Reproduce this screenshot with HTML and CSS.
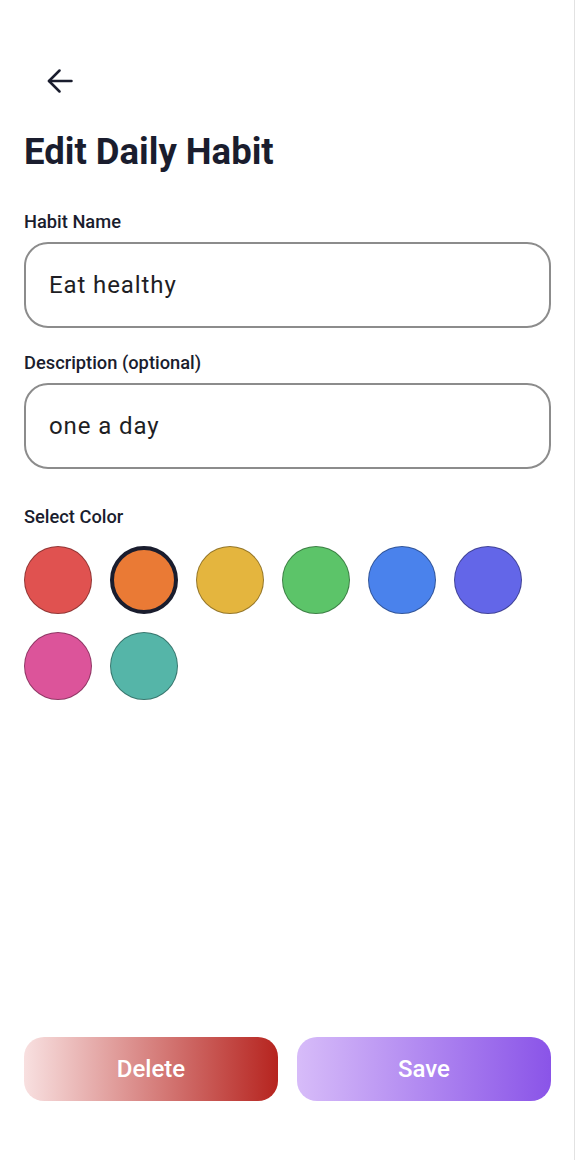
FILE: index.html
```
<!DOCTYPE html>
<html lang="en">

<head>
    <meta charset="UTF-8">
    <meta name="viewport" content="width=device-width, initial-scale=1.0">
    <title>Edit Daily Habit</title>
    <link rel="stylesheet" href="styles.css">
</head>

<body>
    <div class="screen">
        <div class="top">
            <button class="back" aria-label="Back">
                <svg width="26" height="24" viewBox="0 0 26 24" fill="none" stroke="#1a1d2e" stroke-width="2.5"
                    stroke-linecap="round" stroke-linejoin="round">
                    <path d="M24.5 12H2" />
                    <path d="M12.5 1.5L2 12L12.5 22.5" />
                </svg>
            </button>
        </div>
        <h1 class="title">Edit Daily Habit</h1>

        <div class="field">
            <label class="label">Habit Name</label>
            <div class="input">Eat healthy</div>
        </div>
        <div class="field">
            <label class="label">Description (optional)</label>
            <div class="input">one a day</div>
        </div>

        <div class="field pick">
            <label class="label">Select Color</label>
            <div class="colors">
                <span class="dot red"></span>
                <span class="dot orange on"></span>
                <span class="dot yellow"></span>
                <span class="dot green"></span>
                <span class="dot blue"></span>
                <span class="dot indigo"></span>
                <span class="dot pink"></span>
                <span class="dot teal"></span>
            </div>
        </div>

        <div class="actions">
            <button class="btn delete">Delete</button>
            <button class="btn save">Save</button>
        </div>
    </div>
</body>

</html>
```

FILE: styles.css
```
body {
    margin: 0;
    background-color: #fff;
    font-family: Roboto, "Liberation Sans", sans-serif;
    color: #1a1d2e;
}

.screen {
    width: 575px;
    height: 1160px;
    border-right: 1px solid #e2e2e2;
    box-sizing: border-box;
    padding: 0 23px 0 24px;
    display: flex;
    flex-direction: column;
}

.top {
    height: 130px;
    padding-top: 69px;
    box-sizing: border-box;
}

.back {
    border: none;
    background: none;
    padding: 0;
    margin-left: 23px;
    width: 26px;
    height: 24px;
    display: block;
    cursor: pointer;
}

.title {
    margin: 0 0 37px;
    font-size: 36.5px;
    line-height: 44px;
    font-weight: 700;
}

.field {
    display: flex;
    flex-direction: column;
    margin-bottom: 24px;
}

.field.pick {
    margin-top: 13px;
}

.label {
    font-size: 18.3px;
    line-height: 21px;
    font-weight: 500;
    margin-bottom: 10px;
}

.pick .label {
    margin-bottom: 19px;
}

.input {
    height: 86px;
    border: 2px solid #8c8c8c;
    border-radius: 24px;
    box-sizing: border-box;
    padding: 0 23px;
    display: flex;
    align-items: center;
    font-size: 24px;
    letter-spacing: 0.9px;
    color: #1e1e24;
}

.colors {
    display: flex;
    flex-wrap: wrap;
    gap: 18px;
    width: 520px;
}

.dot {
    width: 68px;
    height: 68px;
    border-radius: 50%;
    box-sizing: border-box;
    border: 1px solid rgba(0, 0, 0, 0.35);
}

.dot.on {
    border: 4px solid #1a1d2e;
}

.red { background-color: #e05250; }
.orange { background-color: #ea7a35; }
.yellow { background-color: #e4b53e; }
.green { background-color: #5cc469; }
.blue { background-color: #4a82ec; }
.indigo { background-color: #6366e8; }
.pink { background-color: #dc549a; }
.teal { background-color: #55b5a8; }

.actions {
    margin-top: auto;
    margin-bottom: 59px;
    display: flex;
    gap: 19px;
}

.btn {
    flex: 1;
    height: 64px;
    border: none;
    border-radius: 20px;
    color: #fff;
    font-family: Roboto, "Liberation Sans", sans-serif;
    font-size: 24px;
    font-weight: 500;
    cursor: pointer;
}

.delete {
    background: linear-gradient(90deg, #f8e0e0, #b6241f);
}

.save {
    background: linear-gradient(90deg, #d7bcf9, #8a54e8);
}
```
